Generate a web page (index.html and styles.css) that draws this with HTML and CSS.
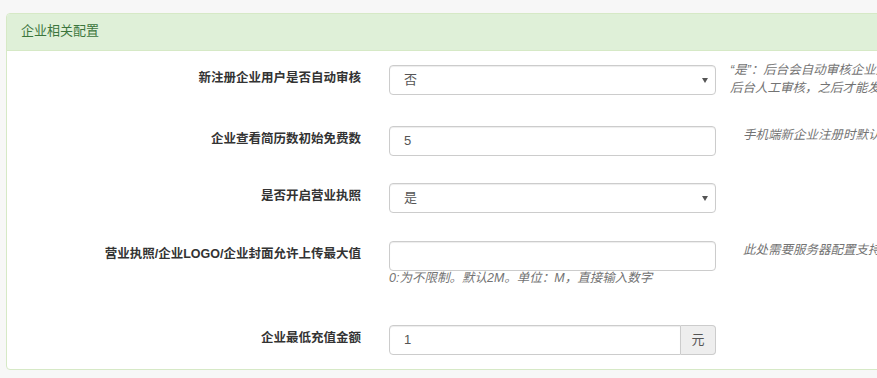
FILE: index.html
```html
<!DOCTYPE html>
<html lang="zh">
<head>
<meta charset="utf-8">
<title>企业相关配置</title>
<link rel="stylesheet" href="styles.css">
</head>
<body>
<div class="page">
  <div class="panel">
    <div class="panel-heading">企业相关配置</div>
    <div class="panel-body">
      <div class="row row-1">
        <label class="label">新注册企业用户是否自动审核</label>
        <div class="control">
          <div class="select"><span>否</span><span class="caret"></span></div>
        </div>
        <div class="help help-center">“是”：后台会自动审核企业用户，“否”：需要<br>后台人工审核，之后才能发布职位信息</div>
      </div>
      <div class="row">
        <label class="label">企业查看简历数初始免费数</label>
        <div class="control">
          <div class="input">5</div>
        </div>
        <div class="help help-indent">手机端新企业注册时默认赠送的免费查看简历数</div>
      </div>
      <div class="row row-3">
        <label class="label">是否开启营业执照</label>
        <div class="control">
          <div class="select"><span>是</span><span class="caret"></span></div>
        </div>
      </div>
      <div class="row row-4">
        <label class="label">营业执照/企业LOGO/企业封面允许上传最大值</label>
        <div class="control">
          <div class="input"></div>
          <div class="help-block">0:为不限制。默认2M。单位：M，直接输入数字</div>
        </div>
        <div class="help help-indent">此处需要服务器配置支持上传大文件</div>
      </div>
      <div class="row">
        <label class="label">企业最低充值金额</label>
        <div class="control">
          <div class="input-group">
            <div class="input input-flat">1</div>
            <div class="addon">元</div>
          </div>
        </div>
      </div>
    </div>
  </div>
</div>
</body>
</html>
```

FILE: styles.css
```css
html, body {
  margin: 0;
  padding: 0;
}
body {
  background: #f7f7f7;
  font-family: "Liberation Sans", "Noto Sans CJK SC", sans-serif;
  font-size: 12.5px;
  color: #333;
  overflow: hidden;
  width: 877px;
  height: 378px;
}
.page {
  padding: 13px 0 0 6px;
}
.panel {
  width: 960px;
  background: #fff;
  border: 1px solid #d6e9c6;
  border-radius: 4px;
}
.panel-heading {
  background: #dff0d8;
  color: #3c763d;
  border-bottom: 1px solid #d6e9c6;
  border-radius: 3px 3px 0 0;
  padding: 0 14px;
  height: 36px;
  line-height: 34px;
  font-size: 13px;
}
.panel-body {
  padding: 14px 0 14px 0;
}
.row {
  display: flex;
  align-items: flex-start;
  margin-bottom: 27px;
}
.row:last-child {
  margin-bottom: 0;
}
.row-1 {
  margin-bottom: 29px;
}
.row-3 {
  margin-bottom: 28px;
}
.row-4 {
  margin-bottom: 39px;
}
.label {
  width: 354px;
  flex: none;
  text-align: right;
  font-weight: bold;
  line-height: 20px;
  padding-top: 3px;
  color: #333;
}
.control {
  margin-left: 28px;
  width: 327px;
  flex: none;
}
.select, .input {
  box-sizing: border-box;
  height: 30px;
  border: 1px solid #ccc;
  border-radius: 4px;
  box-shadow: inset 0 1px 1px rgba(0, 0, 0, 0.075);
  padding: 0 14px;
  line-height: 28px;
  color: #555;
  font-size: 13px;
  background: #fff;
}
.select {
  display: flex;
  justify-content: space-between;
  align-items: center;
  padding-right: 7px;
}
.caret {
  width: 0;
  height: 0;
  border-left: 3px solid transparent;
  border-right: 3px solid transparent;
  border-top: 5px solid #555;
}
.help {
  margin-left: 14px;
  width: 300px;
  flex: none;
  color: #737373;
  font-style: italic;
  line-height: 18px;
  font-size: 12.5px;
}
.help-center {
  margin-top: -4px;
}
.help-indent {
  padding-left: 13px;
  white-space: nowrap;
}
.help-block {
  color: #737373;
  font-style: italic;
  line-height: 15px;
  padding-top: 0;
  font-size: 12.5px;
}
.input-group {
  display: flex;
}
.input-flat {
  flex: 1;
  border-radius: 4px 0 0 4px;
}
.addon {
  box-sizing: border-box;
  width: 35px;
  height: 30px;
  border: 1px solid #ccc;
  border-left: none;
  border-radius: 0 4px 4px 0;
  background: #eee;
  color: #555;
  text-align: center;
  line-height: 28px;
  font-size: 13px;
}
```
